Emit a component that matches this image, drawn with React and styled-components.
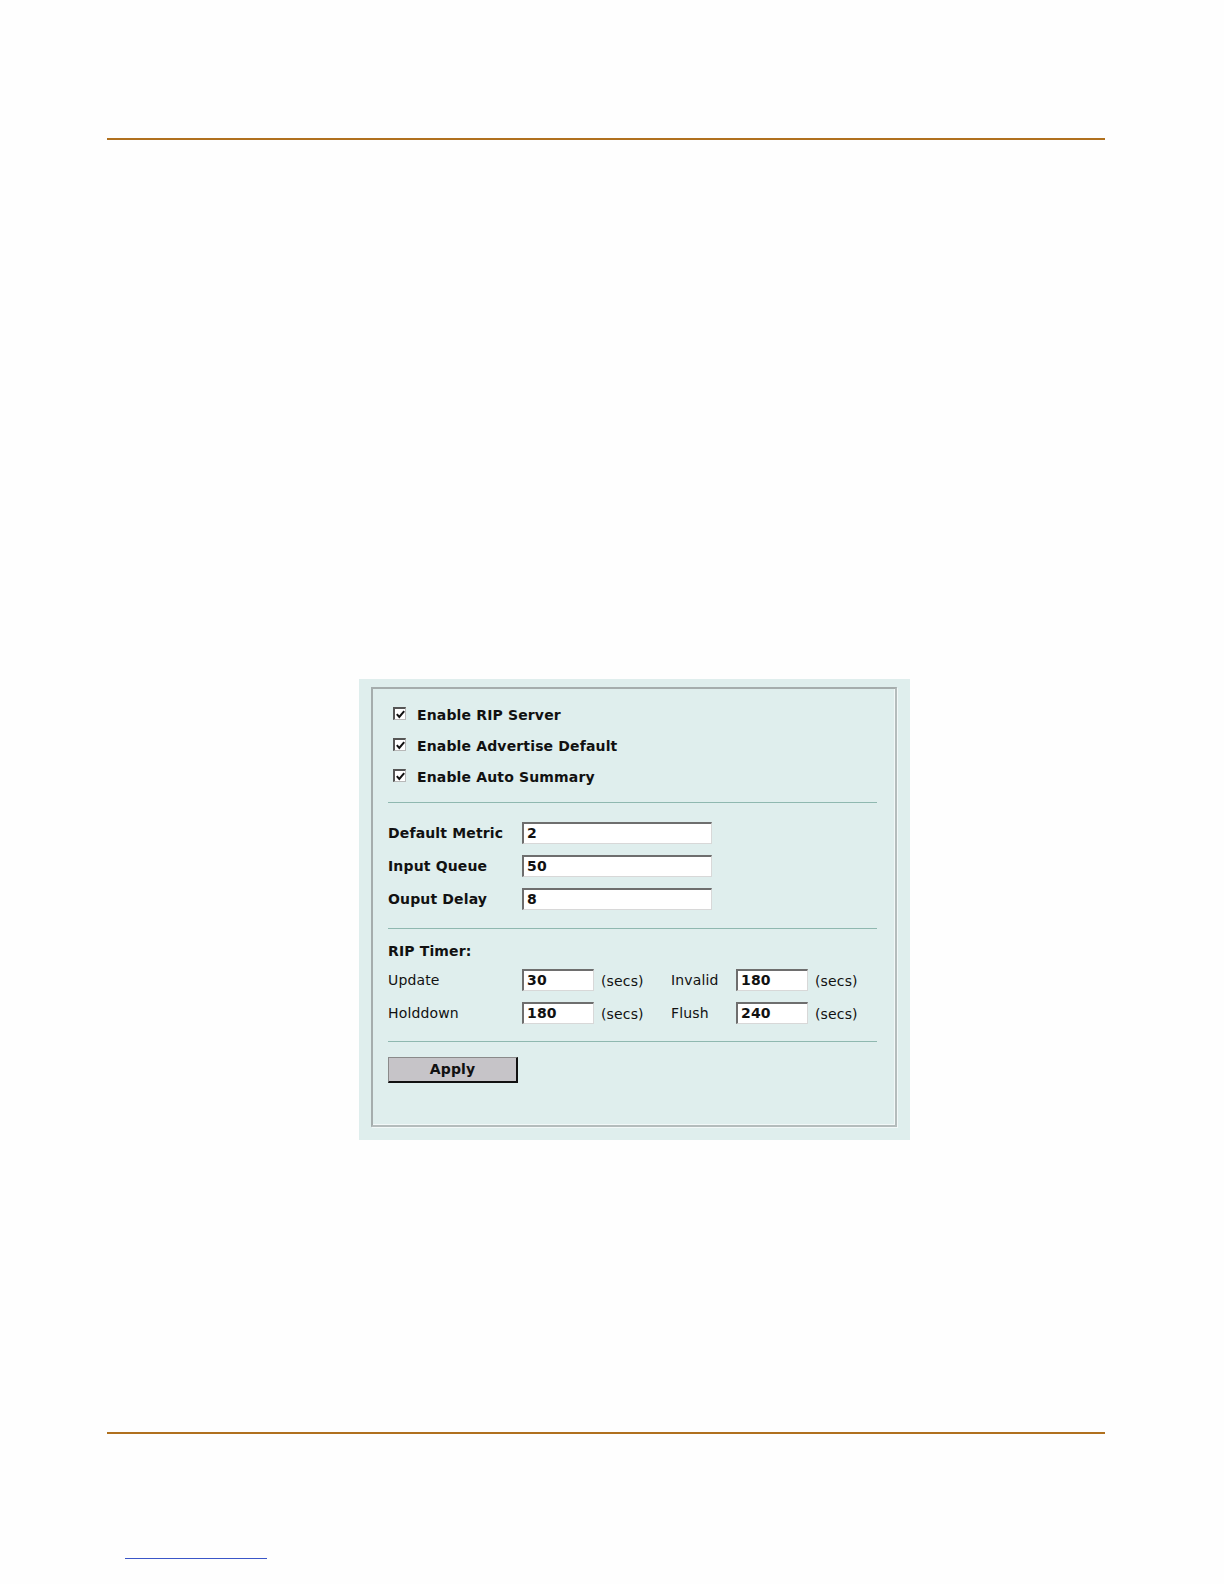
import React from "react";
import styled, { createGlobalStyle } from "styled-components";

const Global = createGlobalStyle`
  html, body { margin: 0; padding: 0; background: #fefefe; overflow: hidden; }
  body { font-family: "DejaVu Sans", Verdana, sans-serif; color: #111; }
`;

const Page = styled.div`
  width: 1224px;
  height: 1584px;
  overflow: hidden;
  box-sizing: border-box;
  padding-top: 138px;
  display: flex;
  flex-direction: column;
`;

const Rule = styled.div`
  flex: none;
  height: 2px;
  background: #b0701e;
  margin: 0 119px 0 107px;
  margin-top: ${(p) => p.$top || 0}px;
`;

const LinkLine = styled.div`
  flex: none;
  height: 1px;
  width: 142px;
  background: #3a56c8;
  margin: 124px 0 0 125px;
`;

const Panel = styled.div`
  flex: none;
  margin: 539px 0 0 359px;
  width: 551px;
  height: 461px;
  box-sizing: border-box;
  background: #dfeeed;
  padding: 8px 13px 13px 12px;
  display: flex;
`;

const Frame = styled.div`
  flex: 1;
  box-sizing: border-box;
  border-top: 2px solid #a5adad;
  border-left: 2px solid #a5adad;
  border-right: 2px solid #b4bcbc;
  border-bottom: 2px solid #b4bcbc;
  box-shadow: inset -1px -1px 0 #f2f8f8, 1px 1px 0 #f2f8f8;
  padding: 10px 18px 0 15px;
  display: flex;
  flex-direction: column;
`;

const Text = styled.span`
  font-size: 14px;
  letter-spacing: 0.15px;
  font-weight: ${(p) => (p.$bold ? "bold" : "normal")};
`;

const CheckRow = styled.label`
  height: 31px;
  display: flex;
  align-items: center;
  padding-left: 5px;
`;

const Box = styled.span`
  width: 13px;
  height: 13px;
  box-sizing: border-box;
  border: 1px solid #555;
  border-top-width: 2px;
  border-left-width: 2px;
  border-right-color: #b8b8b8;
  border-bottom-color: #b8b8b8;
  background: #fff;
  margin-right: 11px;
  margin-top: -2px;
  display: flex;
  align-items: center;
  justify-content: center;
`;

const Separator = styled.div`
  height: 1px;
  background: #8fb8b0;
  margin: ${(p) => p.$m};
`;

const FieldGrid = styled.div`
  display: grid;
  grid-template-columns: 134px 190px;
  grid-auto-rows: 33px;
  align-items: center;
`;

const Input = styled.div`
  height: 22px;
  width: ${(p) => p.$w}px;
  box-sizing: border-box;
  background: #fff;
  border-top: 2px solid #6e6e6e;
  border-left: 2px solid #6e6e6e;
  border-right: 1px solid #d8d8d8;
  border-bottom: 1px solid #d8d8d8;
  padding-left: 3px;
  font-size: 14px;
  letter-spacing: 0.15px;
  font-weight: bold;
  line-height: 19px;
`;

const TimerTitle = styled.div`
  height: 24px;
  display: flex;
  align-items: center;
  margin-top: -2px;
`;

const TimerGrid = styled.div`
  display: grid;
  grid-template-columns: 134px 79px 70px 65px 79px auto;
  grid-auto-rows: 33px;
  align-items: center;
`;

const Secs = styled(Text)`
  margin-top: 2px;
`;

const ApplyButton = styled.button`
  margin-top: 15px;
  width: 130px;
  height: 26px;
  box-sizing: border-box;
  background: #c6c4c8;
  border-top: 1px solid #8a8a8a;
  border-left: 1px solid #8a8a8a;
  border-right: 2px solid #111;
  border-bottom: 2px solid #111;
  font-family: "DejaVu Sans", Verdana, sans-serif;
  font-size: 14px;
  letter-spacing: 0.15px;
  font-weight: bold;
  color: #111;
  padding: 0 0 2px 0;
  align-self: flex-start;
`;

const Check = () => (
  <svg width="9" height="9" viewBox="0 0 9 9">
    <path d="M0.8 4.2 L3.3 7 L8.2 1.2" stroke="#111" strokeWidth="2" fill="none" />
  </svg>
);

const checks = ["Enable RIP Server", "Enable Advertise Default", "Enable Auto Summary"];
const fields = [
  ["Default Metric", "2"],
  ["Input Queue", "50"],
  ["Ouput Delay", "8"],
];
const timers = [
  ["Update", "30", "Invalid", "180"],
  ["Holddown", "180", "Flush", "240"],
];

export default function App() {
  return (
    <Page>
      <Global />
      <Rule />
      <Panel>
        <Frame>
          {checks.map((c) => (
            <CheckRow key={c}>
              <Box>
                <Check />
              </Box>
              <Text $bold>{c}</Text>
            </CheckRow>
          ))}
          <Separator $m="10px 0 13px" />
          <FieldGrid>
            {fields.map(([l, v]) => (
              <React.Fragment key={l}>
                <Text $bold>{l}</Text>
                <Input $w={190}>{v}</Input>
              </React.Fragment>
            ))}
          </FieldGrid>
          <Separator $m="13px 0 12px" />
          <TimerTitle>
            <Text $bold>RIP Timer:</Text>
          </TimerTitle>
          <TimerGrid>
            {timers.map(([a, av, b, bv]) => (
              <React.Fragment key={a}>
                <Text>{a}</Text>
                <Input $w={72}>{av}</Input>
                <Secs>(secs)</Secs>
                <Text>{b}</Text>
                <Input $w={72}>{bv}</Input>
                <Secs>(secs)</Secs>
              </React.Fragment>
            ))}
          </TimerGrid>
          <Separator $m="12px 0 0" />
          <ApplyButton>Apply</ApplyButton>
        </Frame>
      </Panel>
      <Rule $top={292} />
      <LinkLine />
    </Page>
  );
}
